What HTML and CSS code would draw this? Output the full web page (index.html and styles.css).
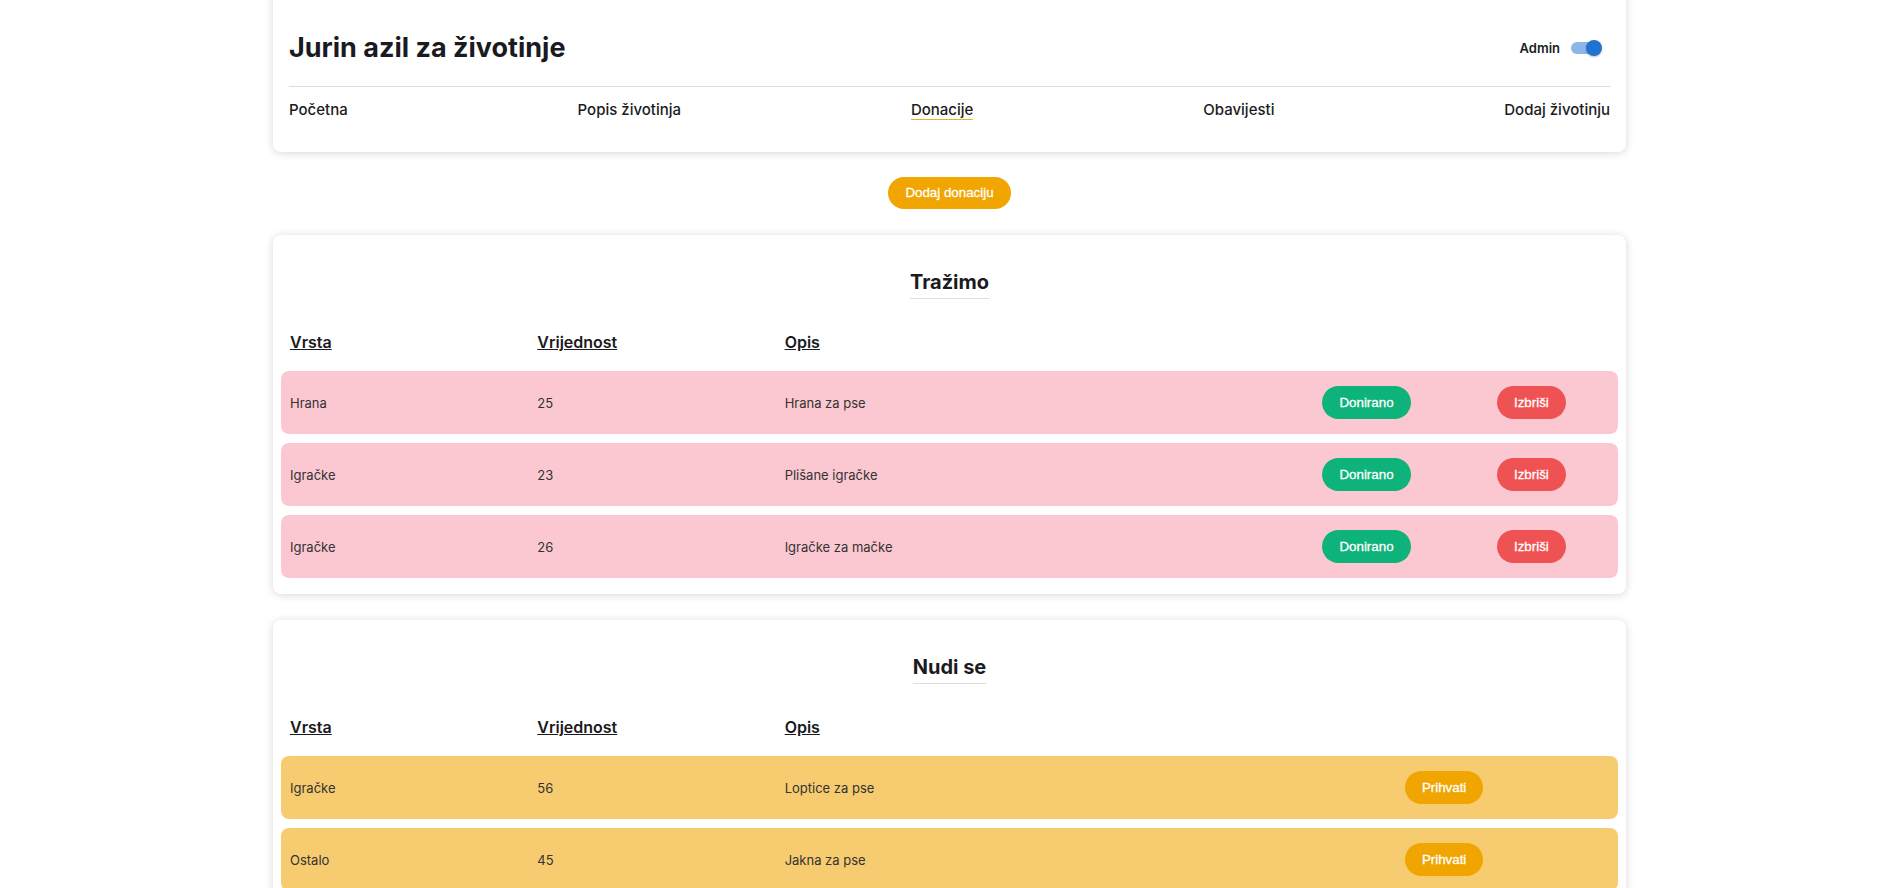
FILE: index.html
```html
<!DOCTYPE html>
<html lang="hr">
<head>
<meta charset="utf-8">
<title>Jurin azil za životinje</title>
<link rel="stylesheet" href="styles.css">
</head>
<body>
<div class="page">
  <header class="card header-card">
    <div class="top-row">
      <h1 class="title">Jurin azil za životinje</h1>
      <label class="admin">
        <span class="admin-label">Admin</span>
        <span class="switch"><span class="track"></span><span class="thumb"></span></span>
      </label>
    </div>
    <nav class="nav">
      <a class="nav-link">Početna</a>
      <a class="nav-link">Popis životinja</a>
      <a class="nav-link active">Donacije</a>
      <a class="nav-link">Obavijesti</a>
      <a class="nav-link">Dodaj životinju</a>
    </nav>
  </header>

  <div class="add-wrap"><button class="btn btn-orange">Dodaj donaciju</button></div>

  <section class="card list-card">
    <div class="list-head"><h2 class="list-title">Tražimo</h2></div>
    <div class="grid-row col-head"><span>Vrsta</span><span>Vrijednost</span><span>Opis</span></div>
    <div class="rows">
      <div class="grid-row item pink"><span>Hrana</span><span>25</span><span>Hrana za pse</span><div class="actions"><button class="btn row-btn btn-green">Donirano</button><button class="btn row-btn btn-red">Izbriši</button></div></div>
      <div class="grid-row item pink"><span>Igračke</span><span>23</span><span>Plišane igračke</span><div class="actions"><button class="btn row-btn btn-green">Donirano</button><button class="btn row-btn btn-red">Izbriši</button></div></div>
      <div class="grid-row item pink"><span>Igračke</span><span>26</span><span>Igračke za mačke</span><div class="actions"><button class="btn row-btn btn-green">Donirano</button><button class="btn row-btn btn-red">Izbriši</button></div></div>
    </div>
  </section>

  <section class="card list-card">
    <div class="list-head"><h2 class="list-title">Nudi se</h2></div>
    <div class="grid-row col-head"><span>Vrsta</span><span>Vrijednost</span><span>Opis</span></div>
    <div class="rows">
      <div class="grid-row item yellow"><span>Igračke</span><span>56</span><span>Loptice za pse</span><div class="actions"><button class="btn row-btn btn-orange">Prihvati</button></div></div>
      <div class="grid-row item yellow"><span>Ostalo</span><span>45</span><span>Jakna za pse</span><div class="actions"><button class="btn row-btn btn-orange">Prihvati</button></div></div>
    </div>
  </section>
</div>
</body>
</html>
```

FILE: styles.css
```css
* { box-sizing: border-box; }
html, body { margin: 0; background: #fff; }
body { font-family: Inter, "Noto Sans", sans-serif; color: #1b1b22; }

.page { width: 1353px; margin-left: 273px; }

.card {
  background: #fff;
  border-radius: 8px;
  box-shadow: 0 1px 8px rgba(0, 0, 0, 0.16);
}

.header-card { margin-top: -16px; padding: 48px 16px 32px; }

.top-row {
  display: flex;
  align-items: center;
  justify-content: space-between;
  padding-bottom: 22px;
  border-bottom: 1px solid #dcdcdc;
}
.title { margin: 0; font-size: 27px; line-height: 32px; font-weight: 700; color: #1a1a22; }

.admin { display: flex; align-items: center; gap: 11px; margin-right: 8px; font-size: 13px; font-weight: 600; color: #1b1b22; }
.switch { position: relative; display: block; width: 31px; height: 16px; }
.track { display: block; width: 28px; height: 12px; margin-top: 2px; border-radius: 6px; background: #8cb5e8; }
.thumb {
  position: absolute; right: 0; top: 0;
  width: 16px; height: 16px; border-radius: 50%;
  background: #1f73d2; box-shadow: 0 1px 2px rgba(0, 0, 0, 0.25);
}

.nav { display: flex; justify-content: space-between; padding-top: 13px; }
.nav-link { font-size: 15px; line-height: 19px; font-weight: 500; color: #1b1b22; text-decoration: none; }
.nav-link.active { border-bottom: 1px solid #e1b530; }

.add-wrap { margin: 25px 0 26px; text-align: center; }

.btn {
  font-family: "Liberation Sans", Arial, sans-serif;
  font-size: 13.33px;
  line-height: 16px;
  padding: 8px 17px;
  border: 0;
  border-radius: 999px;
  color: #fff;
  -webkit-text-stroke: 0.3px #fff;
}
.row-btn { line-height: 17px; }
.btn-orange { background: #f0a500; }
.btn-green { background: #0db37a; }
.btn-red { background: #ef5252; }

.list-card { padding: 35px 8px 16px; }
.list-card + .list-card { margin-top: 26px; }
.list-head { text-align: center; }
.list-title {
  display: inline-block;
  margin: 0;
  font-size: 20px;
  line-height: 24px;
  font-weight: 700;
  padding-bottom: 4px;
  border-bottom: 1px solid #dddddd;
  color: #1a1a22;
}

.grid-row { display: grid; grid-template-columns: 3fr 3fr 6fr 4fr; padding: 0 9px; }
.col-head {
  margin: 33px 0 19px;
  font-size: 16px;
  line-height: 20px;
  font-weight: 600;
  text-decoration: underline;
  color: #1a1a22;
}

.rows { display: flex; flex-direction: column; gap: 9px; }
.item { height: 63px; align-items: center; border-radius: 8px; font-size: 13px; color: #333; }
.pink { background: #fbc8d1; }
.yellow { background: #f7cb6f; }
.actions { display: flex; justify-content: space-around; align-items: center; }
```
